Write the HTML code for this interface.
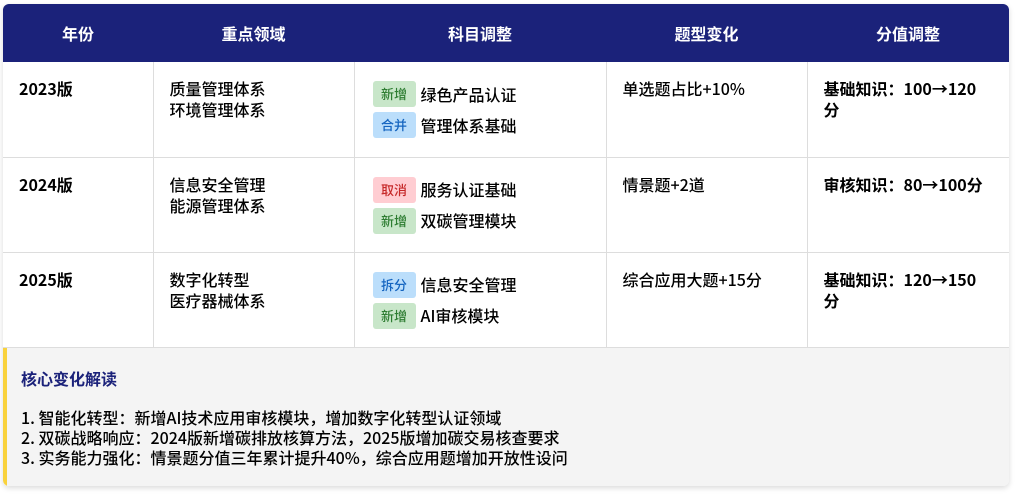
<!DOCTYPE html>
<html><head><meta charset="utf-8"><style>
*{margin:0;padding:0;box-sizing:border-box}
body{width:1015px;height:496px;background:#fff;font-family:"Noto Sans CJK SC","Liberation Sans",sans-serif;color:#111;overflow:hidden}
.wrap{position:absolute;left:3px;top:4px;width:1006px;border-radius:6px;overflow:hidden;box-shadow:0 2px 6px rgba(0,0,0,.15)}
table{border-collapse:collapse;width:100%;table-layout:fixed}
th{background:#1b227a;color:#fff;height:58px;font-size:16px;font-weight:bold;text-align:center}
td{height:95px;vertical-align:top;padding:16px 16px;font-size:16px;font-weight:500;line-height:21px;border-right:1px solid #ddd;border-bottom:1px solid #ddd;color:#000}
td:last-child{border-right:none;font-weight:bold;white-space:nowrap}
td.y{font-weight:bold}
.t{display:inline-block;width:43px;height:26px;line-height:26px;text-align:center;border-radius:3px;font-size:13px;margin-right:5px}
.r{height:26px;display:flex;align-items:center;margin-bottom:5px;font-size:16px}
.g{background:#c8e6c9;color:#2e7d32}.b{background:#bbdefb;color:#1565c0}.p{background:#ffcdd2;color:#c62828}
td.s{padding:2px 18px 0}
td.s .r:first-child{margin-top:17px}
.f{background:#f4f4f4;border-left:4px solid #f9d23c;height:138px;padding:18px 14px}
.f h3{color:#1b227a;font-size:16px;font-weight:bold;margin-bottom:17px}
.f p{font-size:16px;font-weight:500;line-height:20px;color:#000}
</style></head><body><div class="wrap">
<table><colgroup><col style="width:150px"><col style="width:201px"><col style="width:252px"><col style="width:201px"><col style="width:202px"></colgroup>
<tr><th>年份</th><th>重点领域</th><th>科目调整</th><th>题型变化</th><th>分值调整</th></tr>
<tr><td class="y">2023版</td><td>质量管理体系<br>环境管理体系</td><td class="s"><div class="r"><span class="t g">新增</span>绿色产品认证</div><div class="r"><span class="t b">合并</span>管理体系基础</div></td><td>单选题占比+10%</td><td>基础知识：100→120<br>分</td></tr>
<tr><td class="y">2024版</td><td>信息安全管理<br>能源管理体系</td><td class="s"><div class="r"><span class="t p">取消</span>服务认证基础</div><div class="r"><span class="t g">新增</span>双碳管理模块</div></td><td>情景题+2道</td><td>审核知识：80→100分</td></tr>
<tr><td class="y">2025版</td><td>数字化转型<br>医疗器械体系</td><td class="s"><div class="r"><span class="t b">拆分</span>信息安全管理</div><div class="r"><span class="t g">新增</span>AI审核模块</div></td><td>综合应用大题+15分</td><td>基础知识：120→150<br>分</td></tr>
</table>
<div class="f"><h3>核心变化解读</h3>
<p>1. 智能化转型：新增AI技术应用审核模块，增加数字化转型认证领域</p>
<p>2. 双碳战略响应：2024版新增碳排放核算方法，2025版增加碳交易核查要求</p>
<p>3. 实务能力强化：情景题分值三年累计提升40%，综合应用题增加开放性设问</p></div>
</div></body></html>
